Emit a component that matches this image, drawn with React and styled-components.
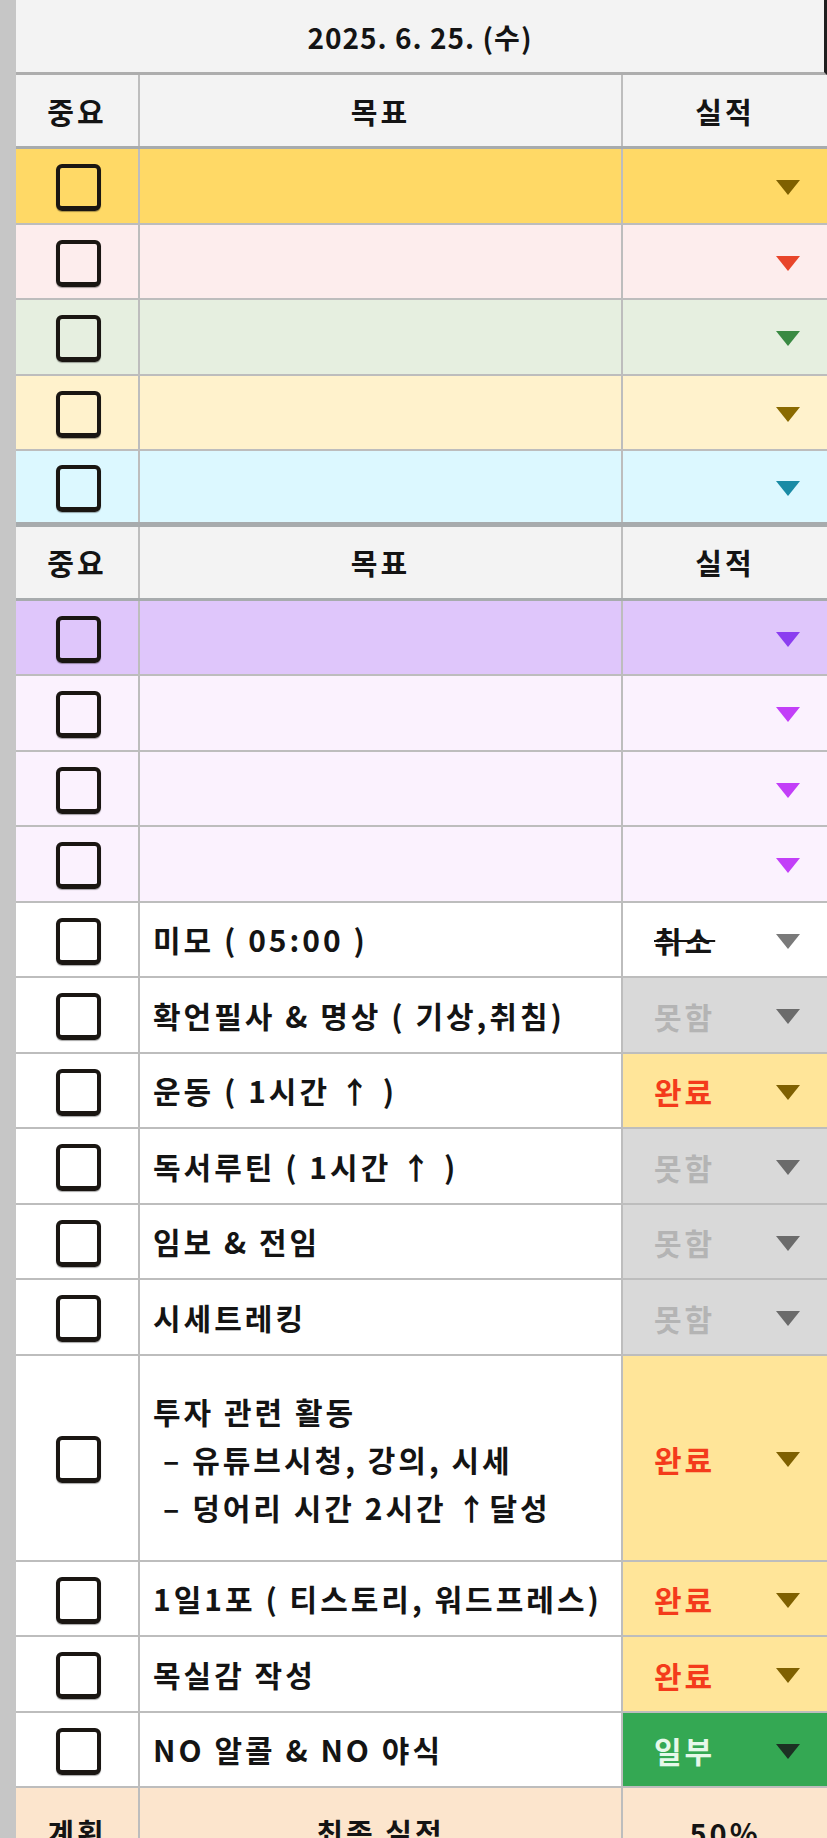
import React from "react";
import styled, { createGlobalStyle } from "styled-components";

const Global = createGlobalStyle`
  html, body {
    margin: 0;
    padding: 0;
    overflow: hidden;
    background: #fff;
  }
  body {
    font-family: "Noto Sans CJK KR", "Noto Sans", sans-serif;
    color: #141414;
  }
`;

const goalRows = [
  { bg: "#ffd966", arrow: "#7f6000" },
  { bg: "#fdeded", arrow: "#e8452a" },
  { bg: "#e6efe0", arrow: "#3a8a43" },
  { bg: "#fff2cc", arrow: "#8a6a00" },
  { bg: "#dcf8ff", arrow: "#1a8ba5" },
];

const weekRows = [
  { bg: "#dfc6fb", arrow: "#8b3ef0" },
  { bg: "#fbf2fe", arrow: "#c23ff8" },
  { bg: "#fbf2fe", arrow: "#c23ff8" },
  { bg: "#fbf2fe", arrow: "#c23ff8" },
];

const statusStyle = {
  cancel: { label: "취소", bg: "#ffffff", color: "#151515", arrow: "#7a7a7a", strike: true },
  miss: { label: "못함", bg: "#d9d9d9", color: "#b4b4b4", arrow: "#6b6b6b" },
  done: { label: "완료", bg: "#ffe599", color: "#f43b1b", arrow: "#7f6000" },
  part: { label: "일부", bg: "#34a853", color: "#e6f8ea", arrow: "#1c3123" },
};

const tasks = [
  { text: "미모 ( 05:00 )", status: "cancel" },
  { text: "확언필사 & 명상 ( 기상,취침)", status: "miss" },
  { text: "운동 ( 1시간 ↑ )", status: "done" },
  { text: "독서루틴 ( 1시간 ↑ )", status: "miss" },
  { text: "임보 & 전임", status: "miss" },
  { text: "시세트레킹", status: "miss" },
  {
    lines: ["투자 관련 활동", "– 유튜브시청, 강의, 시세", "– 덩어리 시간 2시간 ↑달성"],
    status: "done",
    tall: true,
  },
  { text: "1일1포 ( 티스토리, 워드프레스)", status: "done" },
  { text: "목실감 작성", status: "done" },
  { text: "NO 알콜 & NO 야식", status: "part" },
];

const Sheet = styled.div`
  display: flex;
  min-height: 100vh;
`;

const Gutter = styled.div`
  width: 16px;
  flex-shrink: 0;
  background: #c6c6c6;
`;

const Table = styled.div`
  flex: 1;
  display: flex;
  flex-direction: column;
`;

const DateBar = styled.div`
  box-sizing: border-box;
  height: 75px;
  display: flex;
  align-items: center;
  justify-content: center;
  background: #f3f3f3;
  border-bottom: 3px solid #adadad;
  border-right: 3px solid #1e1e1e;
  font-size: 28px;
  font-weight: 700;
  letter-spacing: 1px;
  padding-top: 2px;
`;

const Row = styled.div`
  box-sizing: border-box;
  display: grid;
  grid-template-columns: 124px 483px 1fr;
  height: ${(p) => p.$h || 75.5}px;
  background: ${(p) => p.$bg || "#fff"};
  border-bottom: ${(p) => p.$line || 2}px solid ${(p) => (p.$line > 2 ? "#a7abad" : "#bdbdbd")};
`;

const Cell = styled.div`
  box-sizing: border-box;
  display: flex;
  align-items: center;
  min-width: 0;
  &:not(:last-child) {
    border-right: 2px solid #bdbdbd;
  }
`;

const HeadCell = styled(Cell)`
  justify-content: center;
  font-size: 29px;
  font-weight: 700;
  letter-spacing: 3px;
`;

const BoxCell = styled(Cell)`
  justify-content: center;
  padding: 4px 0 0 2px;
`;

const CheckBox = styled.div`
  box-sizing: border-box;
  width: 45px;
  height: 47px;
  border: 4px solid #1a1612;
  border-bottom-width: 5px;
  border-radius: 6px;
  box-shadow: 0 1px 1px rgba(0, 0, 0, 0.35);
`;

const GoalText = styled(Cell)`
  padding-left: 13px;
  font-size: 30px;
  font-weight: 700;
  letter-spacing: 3px;
  white-space: nowrap;
`;

const Lines = styled.div`
  display: flex;
  flex-direction: column;
  line-height: 48px;
  padding-top: 2px;
`;

const SubLine = styled.span`
  padding-left: ${(p) => (p.$indent ? 10 : 0)}px;
`;

const StatusCell = styled(Cell)`
  background: ${(p) => p.$bg || "transparent"};
  padding: 2px 27px 0 31px;
  font-size: 30px;
  font-weight: 700;
  letter-spacing: 3px;
  color: ${(p) => p.$color || "#151515"};
`;

const StatusLabel = styled.span`
  text-decoration: ${(p) => (p.$strike ? "line-through" : "none")};
  text-decoration-thickness: 2px;
`;

const Arrow = styled.span`
  margin-left: auto;
  margin-top: 2px;
  width: 0;
  height: 0;
  border-left: 12px solid transparent;
  border-right: 12px solid transparent;
  border-top: 15px solid ${(p) => p.$color};
`;

const FooterRow = styled(Row)`
  background: #fce5cd;
  border-bottom: none;
`;

const FootCell = styled(HeadCell)`
  padding-top: 0;
`;

function HeaderRow() {
  return (
    <Row $h={74} $line={3} $bg="#f3f3f3">
      <HeadCell>중요</HeadCell>
      <HeadCell>목표</HeadCell>
      <HeadCell>실적</HeadCell>
    </Row>
  );
}

function ColourRow({ bg, arrow, line }) {
  return (
    <Row $bg={bg} $line={line}>
      <BoxCell>
        <CheckBox />
      </BoxCell>
      <GoalText />
      <StatusCell>
        <Arrow $color={arrow} />
      </StatusCell>
    </Row>
  );
}

function TaskRow({ task }) {
  const st = statusStyle[task.status];
  return (
    <Row $h={task.tall ? 206 : 75.5}>
      <BoxCell>
        <CheckBox />
      </BoxCell>
      <GoalText>
        {task.lines ? (
          <Lines>
            {task.lines.map((l, i) => (
              <SubLine key={i} $indent={i > 0}>
                {l}
              </SubLine>
            ))}
          </Lines>
        ) : (
          task.text
        )}
      </GoalText>
      <StatusCell $bg={st.bg} $color={st.color}>
        <StatusLabel $strike={st.strike}>{st.label}</StatusLabel>
        <Arrow $color={st.arrow} />
      </StatusCell>
    </Row>
  );
}

export default function App() {
  return (
    <>
      <Global />
      <Sheet>
        <Gutter />
        <Table>
          <DateBar>2025. 6. 25. (수)</DateBar>
          <HeaderRow />
          {goalRows.map((r, i) => (
            <ColourRow key={i} bg={r.bg} arrow={r.arrow} line={i === goalRows.length - 1 ? 5 : 2} />
          ))}
          <HeaderRow />
          {weekRows.map((r, i) => (
            <ColourRow key={i} bg={r.bg} arrow={r.arrow} />
          ))}
          {tasks.map((t, i) => (
            <TaskRow key={i} task={t} />
          ))}
          <FooterRow $h={88}>
            <FootCell>계획</FootCell>
            <FootCell>최종 실적</FootCell>
            <FootCell>50%</FootCell>
          </FooterRow>
        </Table>
      </Sheet>
    </>
  );
}
